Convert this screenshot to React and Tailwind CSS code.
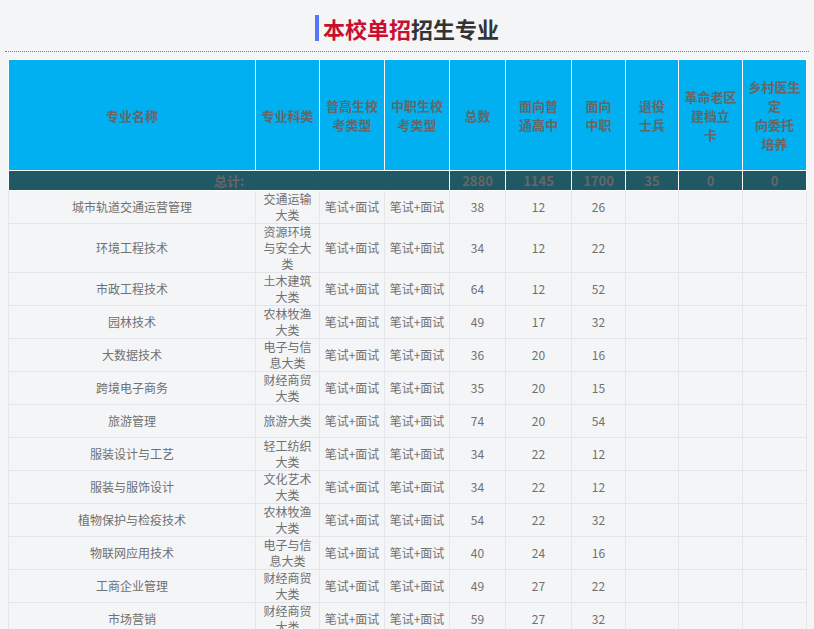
const rows = [
  ['城市轨道交通运营管理', '交通运输大类', 38, 12, 26],
  ['环境工程技术', '资源环境与安全大类', 34, 12, 22],
  ['市政工程技术', '土木建筑大类', 64, 12, 52],
  ['园林技术', '农林牧渔大类', 49, 17, 32],
  ['大数据技术', '电子与信息大类', 36, 20, 16],
  ['跨境电子商务', '财经商贸大类', 35, 20, 15],
  ['旅游管理', '旅游大类', 74, 20, 54],
  ['服装设计与工艺', '轻工纺织大类', 34, 22, 12],
  ['服装与服饰设计', '文化艺术大类', 34, 22, 12],
  ['植物保护与检疫技术', '农林牧渔大类', 54, 22, 32],
  ['物联网应用技术', '电子与信息大类', 40, 24, 16],
  ['工商企业管理', '财经商贸大类', 49, 27, 22],
  ['市场营销', '财经商贸大类', 59, 27, 32],
  ['电子商务', '财经商贸大类', 40, 27, 13],
];

const headers = [
  ['专业名称'], ['专业科类'], ['普高生校', '考类型'], ['中职生校', '考类型'], ['总数'],
  ['面向普', '通高中'], ['面向', '中职'], ['退役', '士兵'], ['革命老区', '建档立', '卡'], ['乡村医生', '定', '向委托', '培养'],
];

const widths = ['w-[247px]', 'w-[64px]', 'w-[65px]', 'w-[65px]', 'w-[56px]', 'w-[66px]', 'w-[54px]', 'w-[53px]', 'w-[64px]', 'w-[64px]'];

export default function App() {
  return (
    <div className="h-[629px] overflow-hidden bg-[#f4f5f7] text-[#666]" style={{ fontFamily: '"Noto Sans CJK SC", "Liberation Sans", sans-serif' }}>
      <div className="flex justify-center pt-[13px] pb-[8px]">
        <div className="flex items-center">
          <span className="mr-[4px] h-[26px] w-[4px] bg-[#5677fc]"></span>
          <h1 className="text-[22px] font-bold leading-[30px] text-[#333]">
            <span className="text-[#c8102e]">本校单招</span>招生专业
          </h1>
        </div>
      </div>
      <div className="mx-[5px] border-t border-dotted border-[#5a9a5a]"></div>
      <div className="px-[8px] pt-[7px]">
        <table className="w-[798px] table-fixed border-collapse text-center text-[12px]">
          <colgroup>
            {widths.map((w, i) => <col key={i} className={w} />)}
          </colgroup>
          <thead>
            <tr className="h-[111px] bg-[#00b0f0]">
              {headers.map((h, i) => (
                <th key={i} className="border border-white px-0 text-[13px] font-bold leading-[19px] text-[#666]">
                  {h.map((l, j) => <div key={j}>{l}</div>)}
                </th>
              ))}
            </tr>
          </thead>
          <tbody>
            <tr className="h-[20px] bg-[#215866] text-[13px] font-bold leading-[18px]">
              <td colSpan={4} className="border border-white">总计:</td>
              <td className="border border-white">2880</td>
              <td className="border border-white">1145</td>
              <td className="border border-white">1700</td>
              <td className="border border-white">35</td>
              <td className="border border-white">0</td>
              <td className="border border-white">0</td>
            </tr>
            {rows.map((r, i) => (
              <tr key={i} className="h-[33px] leading-4 text-[#707070]">
                <td className="border border-[#e4e6ea]">{r[0]}</td>
                <td className="border border-[#e4e6ea] px-[6px]">{r[1]}</td>
                <td className="border border-[#e4e6ea]">笔试+面试</td>
                <td className="border border-[#e4e6ea]">笔试+面试</td>
                <td className="border border-[#e4e6ea]">{r[2]}</td>
                <td className="border border-[#e4e6ea]">{r[3]}</td>
                <td className="border border-[#e4e6ea]">{r[4]}</td>
                <td className="border border-[#e4e6ea]"></td>
                <td className="border border-[#e4e6ea]"></td>
                <td className="border border-[#e4e6ea]"></td>
              </tr>
            ))}
          </tbody>
        </table>
      </div>
    </div>
  );
}
